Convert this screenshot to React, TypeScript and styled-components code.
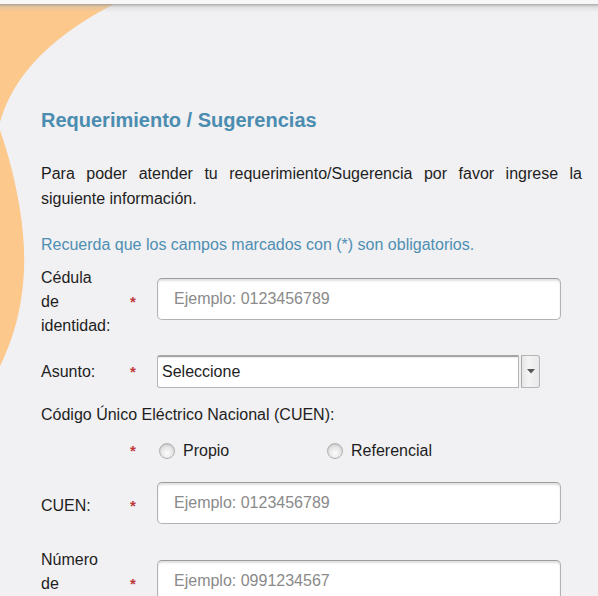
import React from "react";
import styled, { createGlobalStyle } from "styled-components";

const Global = createGlobalStyle`
  html, body { margin: 0; padding: 0; }
  body {
    background: #f1f0f2;
    font-family: "Liberation Sans", Arial, Helvetica, sans-serif;
    color: #222;
    overflow: hidden;
  }
`;

const Page = styled.div`
  position: relative;
  width: 598px;
  height: 596px;
  overflow: hidden;
  background: #f1f0f2;
`;

const Decor = styled.svg`
  position: absolute;
  left: 0;
  top: 0;
  width: 598px;
  height: 596px;
  z-index: 0;
`;

const TopBar = styled.div`
  position: relative;
  z-index: 2;
  height: 12px;
  background: linear-gradient(
    to bottom,
    #f7f7f7 0px,
    #f7f7f7 4px,
    rgba(150, 150, 150, 0.75) 4px,
    rgba(190, 190, 190, 0.35) 7px,
    rgba(241, 240, 242, 0) 12px
  );
`;

const Content = styled.main`
  position: relative;
  z-index: 1;
  padding: 96px 16px 0 41px;
`;

const Title = styled.h1`
  margin: 0;
  font-size: 20px;
  line-height: 24px;
  font-weight: bold;
  color: #4a8db0;
`;

const Intro = styled.p`
  margin: 29px 0 0;
  font-size: 16px;
  line-height: 25px;
  text-align: justify;
  color: #1e1e1e;
`;

const Note = styled.p`
  margin: 22px 0 0;
  font-size: 16px;
  line-height: 24px;
  color: #4e8fb2;
`;

const Form = styled.form`
  display: flex;
  flex-direction: column;
`;

const Row = styled.div<{ $mt: number }>`
  display: grid;
  grid-template-columns: 89px 27px 404px;
  align-items: center;
  margin-top: ${(p) => p.$mt}px;
`;

const Label = styled.label`
  width: 72px;
  font-size: 16px;
  line-height: 24px;
  color: #1e1e1e;
`;

const Star = styled.span`
  color: #c0393b;
  font-size: 15px;
  font-weight: bold;
  line-height: 24px;
`;

const TextInput = styled.input`
  box-sizing: border-box;
  width: 404px;
  height: 42px;
  margin-bottom: 6px;
  border: 1px solid #b2b2b2;
  border-top-color: #9c9c9c;
  border-radius: 5px;
  background: #fff;
  box-shadow: inset 0 2px 2px rgba(0, 0, 0, 0.12);
  padding: 0 16px;
  font-family: inherit;
  font-size: 16px;
  color: #333;
  outline: none;
  &::placeholder {
    color: #8a8a8a;
  }
`;

const Combo = styled.div`
  display: flex;
  width: 383px;
  height: 33px;
`;

const ComboField = styled.div`
  flex: 1;
  box-sizing: border-box;
  border: 1px solid #b5b5b5;
  border-top: 2px solid #a5a5a5;
  border-radius: 3px 0 0 3px;
  background: #fff;
  box-shadow: inset 0 1px 1px rgba(0, 0, 0, 0.08);
  padding: 0 4px;
  display: flex;
  align-items: center;
  font-size: 16px;
  color: #1e1e1e;
`;

const ComboButton = styled.div`
  box-sizing: border-box;
  width: 19px;
  border: 1px solid #b5b5b5;
  border-left: 1px solid #a8a8a8;
  border-radius: 0 3px 3px 0;
  background: linear-gradient(to right, #e6e6e6, #f4f4f4 40%, #e9e9e9);
  display: flex;
  align-items: center;
  justify-content: center;
  margin-left: 2px;
`;

const Heading = styled.div<{ $mt: number }>`
  margin-top: ${(p) => p.$mt}px;
  font-size: 16px;
  line-height: 24px;
  color: #1e1e1e;
`;

const RadioGroup = styled.div`
  display: flex;
  align-items: center;
`;

const RadioOption = styled.label<{ $w: number }>`
  display: flex;
  align-items: center;
  gap: 8px;
  width: ${(p) => p.$w}px;
  font-size: 16px;
  line-height: 24px;
  color: #1e1e1e;
`;

const RadioDot = styled.span`
  box-sizing: border-box;
  width: 16px;
  height: 16px;
  border-radius: 50%;
  border: 1px solid #b0b0b0;
  background: radial-gradient(circle at 50% 65%, #fdfdfd 0%, #e4e4e4 55%, #cfcfcf 100%);
  box-shadow: inset 0 1px 1px rgba(0, 0, 0, 0.1);
  margin-left: 2px;
`;

export default function App() {
  return (
    <Page>
      <Global />
      <Decor viewBox="0 0 598 596" aria-hidden>
        <path d="M0,0 L122,0 Q20,50 0,122 Z" fill="#fcc88b" />
        <path
          d="M0,130 C12,165 26,220 24,270 C22,315 10,345 0,366 Z"
          fill="#fcc88b"
        />
      </Decor>
      <TopBar />
      <Content>
        <Title>Requerimiento / Sugerencias</Title>
        <Intro>
          Para poder atender tu requerimiento/Sugerencia por favor ingrese la
          siguiente información.
        </Intro>
        <Note>Recuerda que los campos marcados con (*) son obligatorios.</Note>
        <Form>
          <Row $mt={9}>
            <Label>Cédula de identidad:</Label>
            <Star>*</Star>
            <TextInput placeholder="Ejemplo: 0123456789" />
          </Row>
          <Row $mt={17}>
            <Label>Asunto:</Label>
            <Star>*</Star>
            <Combo>
              <ComboField>Seleccione</ComboField>
              <ComboButton>
                <svg width="8" height="5" viewBox="0 0 8 5">
                  <path d="M0,0 L8,0 L4,4.5 Z" fill="#555" />
                </svg>
              </ComboButton>
            </Combo>
          </Row>
          <Heading $mt={15}>Código Único Eléctrico Nacional (CUEN):</Heading>
          <Row $mt={12}>
            <span />
            <Star>*</Star>
            <RadioGroup>
              <RadioOption $w={168}>
                <RadioDot />
                Propio
              </RadioOption>
              <RadioOption $w={200}>
                <RadioDot />
                Referencial
              </RadioOption>
            </RadioGroup>
          </Row>
          <Row $mt={19}>
            <Label>CUEN:</Label>
            <Star>*</Star>
            <TextInput placeholder="Ejemplo: 0123456789" />
          </Row>
          <Row $mt={18}>
            <Label>Número de teléfono:</Label>
            <Star>*</Star>
            <TextInput placeholder="Ejemplo: 0991234567" />
          </Row>
        </Form>
      </Content>
    </Page>
  );
}
